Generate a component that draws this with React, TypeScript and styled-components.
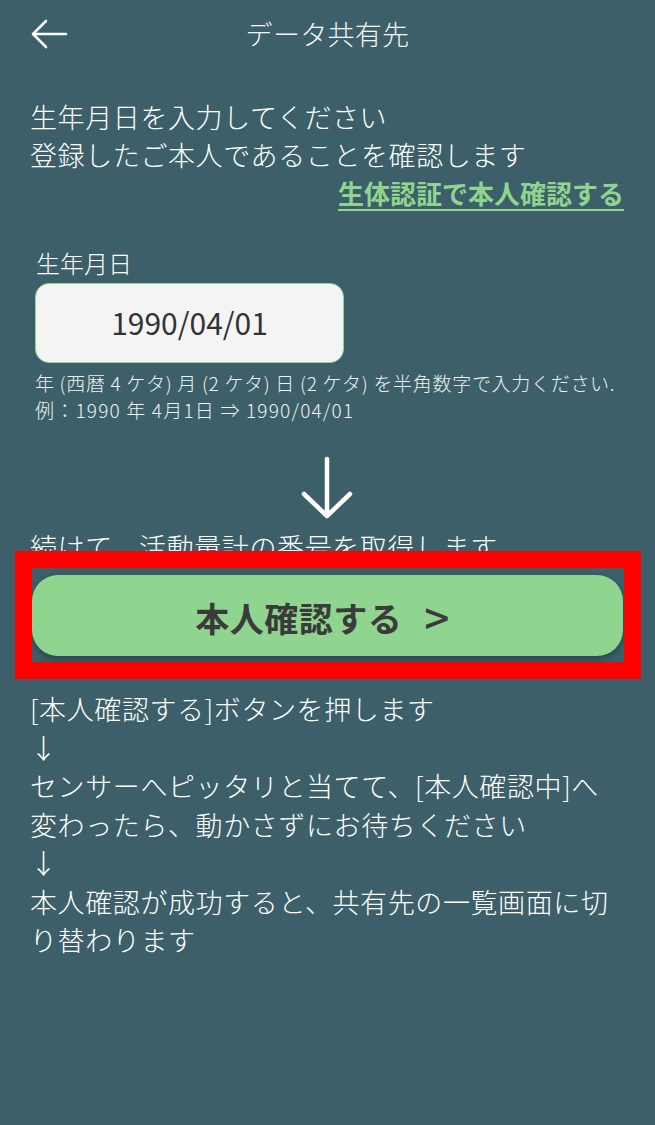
import React from "react";
import styled, { createGlobalStyle } from "styled-components";

const Global = createGlobalStyle`
  html, body {
    margin: 0;
    padding: 0;
    background: #3c5f69;
  }
  body {
    font-family: "Noto Sans CJK JP", "Noto Sans", sans-serif;
    color: #ffffff;
  }
  * { box-sizing: border-box; }
`;

const Page = styled.div`
  width: 655px;
  min-height: 1125px;
  background: #3c5f69;
  display: flex;
  flex-direction: column;
`;

const Header = styled.header`
  height: 66px;
  display: flex;
  align-items: center;
  justify-content: center;
  position: relative;
`;

const BackButton = styled.button`
  position: absolute;
  left: 30px;
  top: 18px;
  width: 40px;
  height: 32px;
  padding: 0;
  border: none;
  background: transparent;
  display: flex;
  align-items: center;
`;

const Title = styled.h1`
  margin: 0;
  font-size: 27px;
  font-weight: 300;
  letter-spacing: 0.3px;
  color: #f4f6f6;
`;

const Intro = styled.div`
  margin-top: 32px;
  padding: 0 31px 0 30px;
  display: flex;
  flex-direction: column;
  font-size: 27px;
  line-height: 38px;
  letter-spacing: 0.6px;
  font-weight: 300;
`;

const LinkText = styled.a`
  align-self: flex-end;
  color: #8fd48f;
  font-weight: 700;
  font-size: 26px;
  text-decoration: underline;
  text-underline-offset: 5px;
  text-decoration-thickness: 2px;
  letter-spacing: 0;
`;

const Field = styled.div`
  margin-top: 36px;
  padding-left: 35px;
  display: flex;
  flex-direction: column;
`;

const FieldLabel = styled.label`
  font-size: 24px;
  line-height: 30px;
  font-weight: 300;
  padding-left: 1px;
  margin-bottom: 5px;
`;

const DateBox = styled.div`
  width: 309px;
  height: 80px;
  border-radius: 14px;
  background: #f4f4f4;
  border: 1.5px solid #8fd48f;
  display: flex;
  align-items: center;
  justify-content: center;
  color: #333333;
  font-size: 30px;
  font-weight: 400;
  padding-bottom: 2px;
`;

const Help = styled.p`
  margin: 6px 0 0;
  font-size: 19px;
  line-height: 27px;
  letter-spacing: 0.7px;
  font-weight: 300;
  color: #eef2f2;
`;

const Example = styled.span`
  letter-spacing: 1.2px;
`;

const ArrowRow = styled.div`
  margin-top: 33px;
  display: flex;
  justify-content: center;
  padding-right: 1px;
`;

const Continue = styled.p`
  margin: 8px 0 0;
  padding-left: 30px;
  font-size: 27px;
  line-height: 38px;
  letter-spacing: 0.6px;
  font-weight: 300;
`;

const ButtonWrap = styled.div`
  position: relative;
  margin: 9px 32px 0 32px;
`;

const PrimaryButton = styled.button`
  width: 591px;
  height: 81px;
  border: none;
  border-radius: 26px;
  background: #8fd48f;
  box-shadow: 0 3px 6px rgba(20, 35, 40, 0.45);
  color: #3b3b3b;
  font-family: "Noto Sans CJK JP", sans-serif;
  font-size: 34px;
  font-weight: 700;
  letter-spacing: 0.5px;
  display: flex;
  align-items: center;
  justify-content: center;
  gap: 22px;
  padding: 4px 10px 0 0;
`;

const Chevron = styled.span`
  font-weight: 500;
  font-size: 44px;
  line-height: 1;
  margin-top: -4px;
`;

const Highlight = styled.div`
  position: absolute;
  left: -17px;
  right: -18px;
  top: -24px;
  bottom: -23px;
  border: 17px solid #ff0000;
  pointer-events: none;
`;

const Steps = styled.div`
  margin-top: 34px;
  padding: 0 30px;
  font-size: 27px;
  line-height: 38.5px;
  letter-spacing: 0.6px;
  font-weight: 300;
`;

const Line = styled.div``;

const BackArrow = () => (
  <svg width="38" height="30" viewBox="0 0 38 30" fill="none">
    <path
      d="M3 15 H36 M3 15 L16 2 M3 15 L16 28"
      stroke="#ffffff"
      strokeWidth="2.6"
      strokeLinecap="round"
      strokeLinejoin="round"
    />
  </svg>
);

const DownArrow = () => (
  <svg width="56" height="64" viewBox="0 0 56 64" fill="none">
    <path
      d="M28 3 V60 M5 38 L28 60 L51 38"
      stroke="#ffffff"
      strokeWidth="4.5"
      strokeLinecap="round"
      strokeLinejoin="round"
    />
  </svg>
);

export default function App() {
  return (
    <Page>
      <Global />
      <Header>
        <BackButton aria-label="戻る">
          <BackArrow />
        </BackButton>
        <Title>データ共有先</Title>
      </Header>

      <Intro>
        <span>生年月日を入力してください</span>
        <span>登録したご本人であることを確認します</span>
        <LinkText>生体認証で本人確認する</LinkText>
      </Intro>

      <Field>
        <FieldLabel>生年月日</FieldLabel>
        <DateBox>1990/04/01</DateBox>
        <Help>
          年 (西暦 4 ケタ) 月 (2 ケタ) 日 (2 ケタ) を半角数字で入力ください.
          <br />
          <Example>例：1990 年 4月1日 ⇒ 1990/04/01</Example>
        </Help>
      </Field>

      <ArrowRow>
        <DownArrow />
      </ArrowRow>

      <Continue>続けて、活動量計の番号を取得します</Continue>

      <ButtonWrap>
        <PrimaryButton>
          <span>本人確認する</span>
          <Chevron>&gt;</Chevron>
        </PrimaryButton>
        <Highlight />
      </ButtonWrap>

      <Steps>
        <Line>[本人確認する]ボタンを押します</Line>
        <Line>↓</Line>
        <Line>センサーへピッタリと当てて、[本人確認中]へ</Line>
        <Line>変わったら、動かさずにお待ちください</Line>
        <Line>↓</Line>
        <Line>本人確認が成功すると、共有先の一覧画面に切</Line>
        <Line>り替わります</Line>
      </Steps>
    </Page>
  );
}
